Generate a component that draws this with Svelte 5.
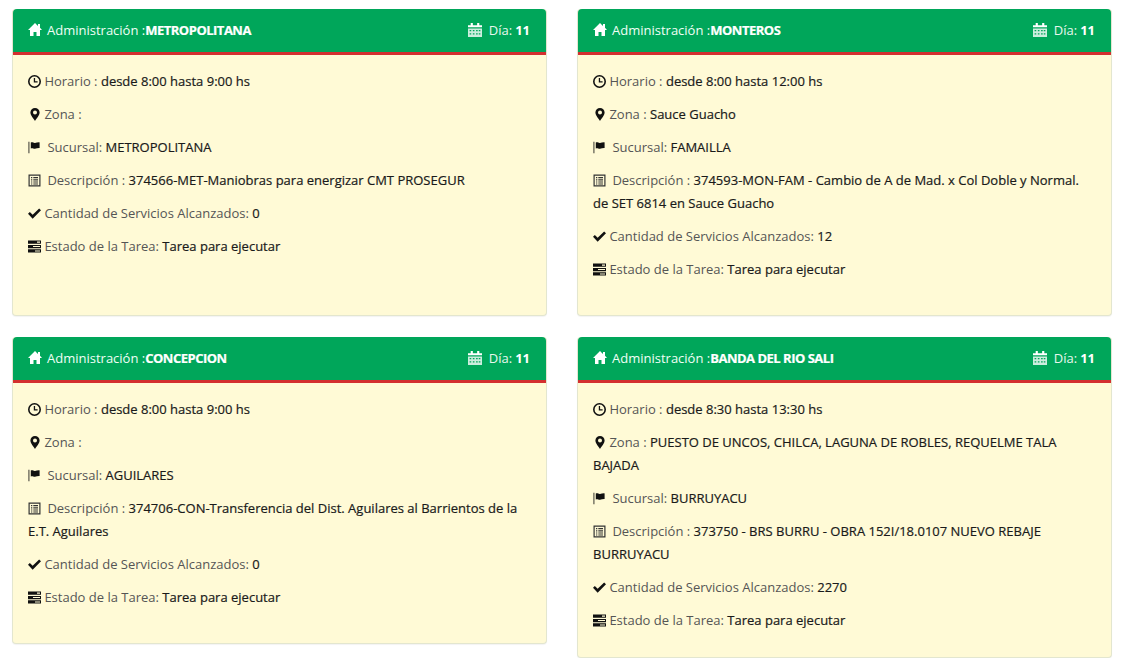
<script>
  const cards = [
    {
      admin: 'METROPOLITANA',
      horario: 'desde 8:00 hasta 9:00 hs',
      zona: '',
      sucursal: 'METROPOLITANA',
      descripcion: '374566-MET-Maniobras para energizar CMT PROSEGUR',
      cantidad: '0'
    },
    {
      admin: 'MONTEROS',
      horario: 'desde 8:00 hasta 12:00 hs',
      zona: 'Sauce Guacho',
      sucursal: 'FAMAILLA',
      descripcion: '374593-MON-FAM - Cambio de A de Mad. x Col Doble y Normal. de SET 6814 en Sauce Guacho',
      cantidad: '12'
    },
    {
      admin: 'CONCEPCION',
      horario: 'desde 8:00 hasta 9:00 hs',
      zona: '',
      sucursal: 'AGUILARES',
      descripcion: '374706-CON-Transferencia del Dist. Aguilares al Barrientos de la E.T. Aguilares',
      cantidad: '0'
    },
    {
      admin: 'BANDA DEL RIO SALI',
      horario: 'desde 8:30 hasta 13:30 hs',
      zona: 'PUESTO DE UNCOS, CHILCA, LAGUNA DE ROBLES, REQUELME TALA BAJADA',
      sucursal: 'BURRUYACU',
      descripcion: '373750 - BRS BURRU - OBRA 152I/18.0107 NUEVO REBAJE BURRUYACU',
      cantidad: '2270'
    }
  ];
</script>

<div class="grid">
  {#each cards as card}
    <section class="panel">
      <header class="heading">
        <div class="title">
          <svg class="home" viewBox="0 0 14 13"><path d="M7 0 L10 2.9 V1 H12 V4.8 L14 7 H12 V13 H8.5 V9 H5.5 V13 H2 V7 H0 Z" /></svg>
          <span class="admin">Administración :</span><b class="name">{card.admin}</b>
        </div>
        <div class="day">
          <svg class="cal" viewBox="0 0 13 13">
            <path d="M0 2 H2.5 V0 H4.5 V2 H8.5 V0 H10.5 V2 H13 V4 H0 Z" />
            <path opacity="0.8" d="M0 5 H13 V13 H0 Z M1.5 6.5 V7.7 H3 V6.5 Z M4.5 6.5 V7.7 H6 V6.5 Z M7.5 6.5 V7.7 H9 V6.5 Z M10 6.5 V7.7 H11.5 V6.5 Z M1.5 9.5 V10.7 H3 V9.5 Z M4.5 9.5 V10.7 H6 V9.5 Z M7.5 9.5 V10.7 H9 V9.5 Z M10 9.5 V10.7 H11.5 V9.5 Z" fill-rule="evenodd" />
          </svg>
          <span class="dia">Día:</span><b class="num">11</b>
        </div>
      </header>
      <div class="body">
        <p>
          <svg class="icon" viewBox="0 0 13 13"><path d="M6.5 0 A6.5 6.5 0 1 0 6.5 13 A6.5 6.5 0 1 0 6.5 0 Z M6.5 1.6 A4.9 4.9 0 1 1 6.5 11.4 A4.9 4.9 0 1 1 6.5 1.6 Z M5.8 3 H7.1 V6.2 H9.6 V7.5 H5.8 Z" fill-rule="evenodd" /></svg>
          <span class="label">Horario :</span> {card.horario}
        </p>
        <p>
          <svg class="icon pin" viewBox="0 0 10 13"><path d="M5 0 A4.6 4.6 0 0 0 0.4 4.6 C0.4 7.6 3.6 10.6 5 13 C6.4 10.6 9.6 7.6 9.6 4.6 A4.6 4.6 0 0 0 5 0 Z M5 2.6 A2 2 0 1 1 5 6.6 A2 2 0 1 1 5 2.6 Z" fill-rule="evenodd" /></svg>
          <span class="label">Zona :</span> {card.zona}
        </p>
        <p>
          <svg class="icon wide" viewBox="0 0 13 13"><path opacity="0.7" d="M0.3 0.8 H1.5 V12.2 H0.3 Z" /><path d="M2.8 1.6 C4.5 0.8 5.5 2.2 7 2 C8.5 1.8 10 1.2 11.6 1.4 V7 C10 6.8 8.5 7.6 7 7.8 C5.5 8 4.5 6.6 2.8 7.4 Z" /></svg>
          <span class="label">Sucursal:</span> {card.sucursal}
        </p>
        <p>
          <svg class="icon wide list" viewBox="0 0 13 13"><path d="M0.5 0.5 H12.5 V12.5 H0.5 Z M1.7 1.7 V11.3 H11.3 V1.7 Z M3 3 H4.3 V4.2 H3 Z M5.3 3 H10 V4.2 H5.3 Z M3 5.2 H4.3 V6.4 H3 Z M5.3 5.2 H10 V6.4 H5.3 Z M3 7.4 H4.3 V8.6 H3 Z M5.3 7.4 H10 V8.6 H5.3 Z M3 9.4 H4.3 V10.4 H3 Z M5.3 9.4 H10 V10.4 H5.3 Z" fill-rule="evenodd" /></svg>
          <span class="label">Descripción :</span> {card.descripcion}
        </p>
        <p>
          <svg class="icon" viewBox="0 0 14 12"><path d="M0 6.4 L2 4.4 L5 7.4 L12 0.6 L14 2.6 L5 11.6 Z" /></svg>
          <span class="label">Cantidad de Servicios Alcanzados:</span> {card.cantidad}
        </p>
        <p>
          <svg class="icon" viewBox="0 0 13 13"><path d="M0 0.5 H13 V3.8 H0 Z M9 1.6 V2.7 H12 V1.6 Z M0 4.9 H13 V8.2 H0 Z M5 6 V7.1 H12 V6 Z M0 9.3 H13 V12.6 H0 Z M7 10.4 V11.5 H12 V10.4 Z" fill-rule="evenodd" /></svg>
          <span class="label">Estado de la Tarea:</span> Tarea para ejecutar
        </p>
      </div>
    </section>
  {/each}
</div>

<style>
  :global(body) {
    background: #fff;
  }

  .grid {
    display: grid;
    grid-template-columns: 535px 535px;
    column-gap: 30px;
    row-gap: 21px;
    align-items: start;
    padding: 9px 0 0 12px;
    font-family: "Open Sans", sans-serif;
    font-size: 13px;
  }

  .panel {
    min-height: 307px;
    box-sizing: border-box;
    background: #fffad6;
    border: 1px solid #e3e6cf;
    border-top: 0;
    border-radius: 4px;
    box-shadow: 0 1px 1px rgba(0, 0, 0, 0.05);
  }

  .heading {
    height: 41px;
    padding: 0 16px 2px 15px;
    display: flex;
    justify-content: space-between;
    align-items: center;
    background: #00a65a;
    border-bottom: 3px solid #d32f2f;
    border-radius: 4px 4px 0 0;
    color: #fff;
  }

  .title, .day {
    display: flex;
    align-items: center;
    white-space: pre;
  }

  .name {
    font-weight: 700;
    letter-spacing: -0.5px;
    -webkit-text-stroke: 0.2px #fff;
  }

  .admin {
    color: #f0fff6;
  }

  .home {
    width: 14px;
    height: 13px;
    margin-right: 5px;
    fill: #fff;
  }

  .cal {
    width: 14px;
    height: 14px;
    margin-right: 7px;
    fill: #fff;
  }

  .dia {
    color: #e8f8ee;
  }

  .num {
    margin-left: 3px;
  }

  .body {
    padding: 15px;
  }

  p {
    margin: 0 0 10px;
    line-height: 23px;
    color: #1a1a1a;
    font-weight: 500;
    -webkit-text-stroke: 0.2px #1a1a1a;
  }

  .label {
    color: #555;
    font-weight: 400;
    -webkit-text-stroke: 0;
  }

  .icon {
    fill: #111;
    width: 13px;
    height: 13px;
    vertical-align: -1.5px;
  }

  .pin {
    width: 10px;
    margin-left: 2px;
    margin-right: 1px;
  }

  .wide {
    margin-right: 3px;
  }

  .list {
    fill: #333;
  }
</style>
